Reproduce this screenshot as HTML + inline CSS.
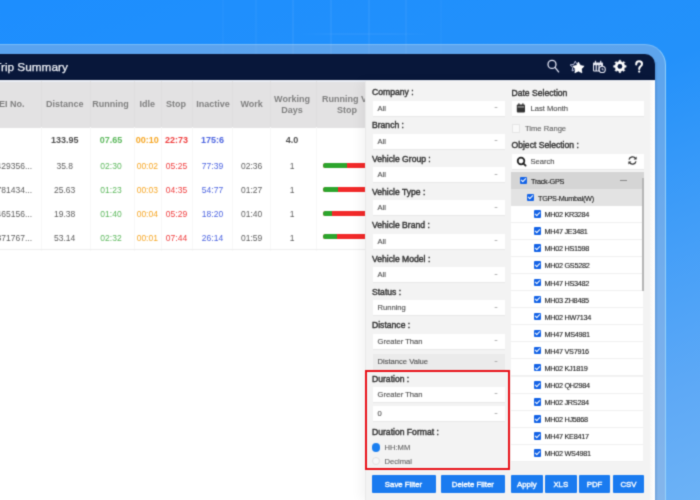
<!DOCTYPE html>
<html><head><meta charset="utf-8">
<style>
*{margin:0;padding:0;box-sizing:border-box}
html,body{width:700px;height:500px;overflow:hidden}
body{position:relative;font-family:"Liberation Sans",sans-serif;background:#2391fa}
#wrap{position:absolute;left:0;top:0;width:700px;height:500px;overflow:hidden;background:linear-gradient(160deg,#1d8efe 0%,#2391fa 40%,#5ea9f6 85%,#6cb2f6 100%);filter:url(#soft)}
.abs{position:absolute}
.gl{position:absolute;top:0;width:2px;height:56px;background:rgba(255,255,255,0.045)}
#frame{position:absolute;left:-30px;top:44px;width:696px;height:480px;border-radius:0 21px 0 0;background:rgba(165,188,222,0.45);border-top:1px solid rgba(150,210,255,0.5);border-right:1.2px solid rgba(160,220,255,0.75)}
#nav{position:absolute;left:-20px;top:54px;width:675px;height:26.2px;border-radius:0 10px 0 0;background:#08173a}
#nav .t{position:absolute;left:14.2px;top:6px;color:#eef1f7;font-size:11.8px;line-height:14px;-webkit-text-stroke:0.25px #eef1f7}
#content{position:absolute;left:0;top:81px;width:655px;height:419px;background:#fff}
#thead{position:absolute;left:0;top:0;width:366px;height:46.5px;background:#e3e2e3}
.sep{position:absolute;top:0;width:1px;height:170px;background:linear-gradient(#dfdedf 0,#dfdedf 46.5px,#f7f7f7 46.5px,#f7f7f7 100%)}
.h{position:absolute;font-size:9px;font-weight:bold;color:#808080;white-space:nowrap;text-align:center;line-height:11px;width:80px;margin-left:-40px}
.c{position:absolute;font-size:8.5px;line-height:10px;color:#606060;white-space:nowrap;text-align:center;width:60px;margin-left:-30px}
.tb{font-weight:bold;font-size:9px;color:#505050}
.g{color:#5cb85c}.o{color:#f6a623}.r{color:#ef3b3b}.b{color:#4b63e0}
.bar{position:absolute;left:322.5px;width:60px;height:5.4px;border-radius:3px;background:#f22a2a;overflow:hidden}
.bar i{display:block;height:5.4px;background:#2da52d}
#panel{position:absolute;left:365px;top:81px;width:290px;height:419px;background:#f3f3f3;border-left:1px solid #e9e9e9;box-shadow:-5px 0 10px rgba(0,0,0,0.045)}
.lab{position:absolute;font-size:8.6px;line-height:10px;font-weight:normal;color:#333;-webkit-text-stroke:0.4px #333;white-space:nowrap}
.inp{position:absolute;height:15px;background:#fff;box-shadow:0 1px 0 #e8e8e8;font-size:7.6px;color:#555;-webkit-text-stroke:0.15px #555;padding-left:5px;line-height:15px;white-space:nowrap}
.inp .ar{position:absolute;right:7px;top:6.6px;width:0;height:0;border-left:2px solid transparent;border-right:2px solid transparent;border-top:1.8px solid #9a9a9a}
.rl{position:absolute;font-size:7.6px;line-height:10px;color:#666;-webkit-text-stroke:0.12px #666;white-space:nowrap}
.btn{position:absolute;top:474.7px;height:18.8px;background:#1a7bf0;color:#fff;font-size:7.8px;font-weight:normal;-webkit-text-stroke:0.35px #fff;text-align:center;line-height:19px;border-radius:1px}
.tr{position:absolute;overflow:hidden}
.tt{position:absolute;top:0.6px;line-height:17px;font-size:7.3px;letter-spacing:-0.3px;color:#222;-webkit-text-stroke:0.12px #222;margin-left:0.5px;white-space:nowrap}
.cb{position:absolute;top:4.6px;width:7px;height:7.5px;background:#1463e6;border-radius:1px}
.cb:after{content:"";position:absolute;left:2.2px;top:0.6px;width:2px;height:4px;border:solid #fff;border-width:0 1.2px 1.2px 0;transform:rotate(45deg)}
.dots{position:absolute;left:109px;top:8px;width:7px;height:1.3px;background:#8a8a8a}
</style></head>
<body>
<svg width="0" height="0" style="position:absolute"><filter id="soft" x="0" y="0" width="100%" height="100%" color-interpolation-filters="sRGB"><feConvolveMatrix order="3" kernelMatrix="1 4 1 4 16 4 1 4 1" divisor="36" edgeMode="duplicate"/></filter></svg>
<div id="wrap">
<div class="gl" style="left:222px;background:rgba(255,255,255,0.025)"></div>
<div class="gl" style="left:255px;background:rgba(255,255,255,0.035)"></div>
<div class="gl" style="left:292px;background:rgba(255,255,255,0.05)"></div>
<div class="gl" style="left:330px;background:rgba(255,255,255,0.05)"></div>
<div class="gl" style="left:368px;background:rgba(255,255,255,0.05)"></div>
<div class="gl" style="left:405px;background:rgba(255,255,255,0.045)"></div>
<div class="gl" style="left:440px;background:rgba(255,255,255,0.02)"></div>
<div class="abs" style="left:300px;top:33px;width:130px;height:1.5px;background:linear-gradient(90deg,rgba(255,255,255,0),rgba(255,255,255,0.04) 30%,rgba(255,255,255,0.04) 70%,rgba(255,255,255,0))"></div>
<div id="frame"></div>
<div class="abs" style="left:655px;top:62px;width:2.5px;height:438px;background:linear-gradient(90deg,rgba(0,40,110,0.14),rgba(0,40,110,0))"></div>
<div id="nav"><div class="t">Trip Summary</div></div>
<svg class="abs" style="left:0;top:0" width="700" height="100" viewBox="0 0 700 100">
<g fill="none" stroke="#dfe2f2" stroke-width="1.3"><circle cx="552" cy="64.4" r="4.0"/><line x1="555" y1="67.4" x2="558.6" y2="71.9" stroke-linecap="round"/></g>
<path d="M575.30,61.20 L576.89,64.42 L580.44,64.93 L577.87,67.43 L578.47,70.97 L575.30,69.30 L572.13,70.97 L572.73,67.43 L570.16,64.93 L573.71,64.42Z" fill="none" stroke="#b8bedc" stroke-width="1" stroke-linejoin="round"/>
<path d="M578.40,62.00 L580.19,65.53 L584.11,66.15 L581.30,68.94 L581.93,72.85 L578.40,71.05 L574.87,72.85 L575.50,68.94 L572.69,66.15 L576.61,65.53Z" fill="#ffffff" stroke="#0a1a3f" stroke-width="1.4" stroke-linejoin="round" paint-order="stroke"/>
<path d="M578.40,62.00 L580.19,65.53 L584.11,66.15 L581.30,68.94 L581.93,72.85 L578.40,71.05 L574.87,72.85 L575.50,68.94 L572.69,66.15 L576.61,65.53Z" fill="#ffffff" stroke="#ffffff" stroke-width="0.6" stroke-linejoin="round"/>
<g fill="#e8eaf4"><rect x="593" y="62.4" width="10" height="9" rx="0.8"/><rect x="594.9" y="60.8" width="1.2" height="2.4"/><rect x="600.1" y="60.8" width="1.2" height="2.4"/></g>
<g fill="#0a1a3f"><rect x="594" y="65.2" width="1.6" height="5.3"/><rect x="596.8" y="65.2" width="1.6" height="5.3"/><rect x="599.6" y="65.2" width="1.6" height="2.3"/></g>
<circle cx="602.2" cy="69.4" r="3.1" fill="#0a1a3f" stroke="#e8eaf4" stroke-width="1.1"/>
<path d="M602.2 67.9 V69.8 H603.6" fill="none" stroke="#e8eaf4" stroke-width="0.8"/>
<path d="M624.43,64.52 L624.73,65.56 L626.15,65.61 L626.15,67.19 L624.73,67.24 L624.43,68.28 L623.91,69.22 L624.88,70.26 L623.76,71.38 L622.72,70.41 L621.78,70.93 L620.74,71.23 L620.69,72.65 L619.11,72.65 L619.06,71.23 L618.02,70.93 L617.08,70.41 L616.04,71.38 L614.92,70.26 L615.89,69.22 L615.37,68.28 L615.07,67.24 L613.65,67.19 L613.65,65.61 L615.07,65.56 L615.37,64.52 L615.89,63.58 L614.92,62.54 L616.04,61.42 L617.08,62.39 L618.02,61.87 L619.06,61.57 L619.11,60.15 L620.69,60.15 L620.74,61.57 L621.78,61.87 L622.72,62.39 L623.76,61.42 L624.88,62.54 L623.91,63.58Z" fill="#ffffff" stroke="#ffffff" stroke-width="0.5" stroke-linejoin="round"/>
<circle cx="619.9" cy="66.4" r="2.4" fill="#0a1a3f"/>
<path d="M636.2 64.4 C636.2 62.4 637.6 61.3 639.1 61.3 C640.7 61.3 642 62.4 642 64 C642 65.4 641.1 66 640.3 66.6 C639.5 67.2 639.2 67.7 639.2 68.9" fill="none" stroke="#ffffff" stroke-width="2" stroke-linecap="round"/>
<circle cx="639.2" cy="71.6" r="1.15" fill="#ffffff"/>
</svg>
<div id="content"><div id="thead"></div><div class="abs" style="left:0;top:-0.8px;width:655px;height:1.3px;background:#e9edf4"></div>
<div class="sep" style="left:41px"></div>
<div class="sep" style="left:90px"></div>
<div class="sep" style="left:133.5px"></div>
<div class="sep" style="left:161px"></div>
<div class="sep" style="left:191.5px"></div>
<div class="sep" style="left:232px"></div>
<div class="sep" style="left:269.5px"></div>
<div class="sep" style="left:315.5px"></div>
<div class="h" style="left:64.7px;top:18px">Distance</div>
<div class="h" style="left:110.6px;top:18px">Running</div>
<div class="h" style="left:147.3px;top:18px">Idle</div>
<div class="h" style="left:176.1px;top:18px">Stop</div>
<div class="h" style="left:213px;top:18px">Inactive</div>
<div class="h" style="left:251.6px;top:18px">Work</div>
<div class="h" style="left:-11px;top:18px;margin-left:0;width:auto;text-align:left">IMEI No.</div>
<div class="h" style="left:292px;top:13px">Working<br>Days</div>
<div class="h" style="left:347px;top:13px">Running Vs<br>Stop</div>
<div class="c tb " style="left:64.7px;top:54.2px">133.95</div>
<div class="c tb g" style="left:111px;top:54.2px">07.65</div>
<div class="c tb o" style="left:147.3px;top:54.2px">00:10</div>
<div class="c tb r" style="left:176.5px;top:54.2px">22:73</div>
<div class="c tb b" style="left:212.5px;top:54.2px">175:6</div>
<div class="c tb " style="left:292px;top:54.2px">4.0</div>
<div class="c" style="left:-30px;width:62px;margin-left:0;text-align:right;top:80.3px">5429356...</div>
<div class="c " style="left:64.7px;top:80.3px">35.8</div>
<div class="c g" style="left:111px;top:80.3px">02:30</div>
<div class="c o" style="left:147.3px;top:80.3px">00:02</div>
<div class="c r" style="left:176.5px;top:80.3px">05:25</div>
<div class="c b" style="left:212.5px;top:80.3px">77:39</div>
<div class="c " style="left:251.6px;top:80.3px">02:36</div>
<div class="c " style="left:292px;top:80.3px">1</div>
<div class="bar" style="top:81.8px"><i style="width:24px"></i></div>
<div class="c" style="left:-30px;width:62px;margin-left:0;text-align:right;top:104.2px">7781434...</div>
<div class="c " style="left:64.7px;top:104.2px">25.63</div>
<div class="c g" style="left:111px;top:104.2px">01:23</div>
<div class="c o" style="left:147.3px;top:104.2px">00:03</div>
<div class="c r" style="left:176.5px;top:104.2px">04:35</div>
<div class="c b" style="left:212.5px;top:104.2px">54:77</div>
<div class="c " style="left:251.6px;top:104.2px">01:27</div>
<div class="c " style="left:292px;top:104.2px">1</div>
<div class="bar" style="top:105.7px"><i style="width:15.5px"></i></div>
<div class="c" style="left:-30px;width:62px;margin-left:0;text-align:right;top:128.0px">5465156...</div>
<div class="c " style="left:64.7px;top:128.0px">19.38</div>
<div class="c g" style="left:111px;top:128.0px">01:40</div>
<div class="c o" style="left:147.3px;top:128.0px">00:04</div>
<div class="c r" style="left:176.5px;top:128.0px">05:29</div>
<div class="c b" style="left:212.5px;top:128.0px">18:20</div>
<div class="c " style="left:251.6px;top:128.0px">01:40</div>
<div class="c " style="left:292px;top:128.0px">1</div>
<div class="bar" style="top:129.5px"><i style="width:9px"></i></div>
<div class="c" style="left:-30px;width:62px;margin-left:0;text-align:right;top:151.5px">9871767...</div>
<div class="c " style="left:64.7px;top:151.5px">53.14</div>
<div class="c g" style="left:111px;top:151.5px">02:32</div>
<div class="c o" style="left:147.3px;top:151.5px">00:01</div>
<div class="c r" style="left:176.5px;top:151.5px">07:44</div>
<div class="c b" style="left:212.5px;top:151.5px">26:14</div>
<div class="c " style="left:251.6px;top:151.5px">01:59</div>
<div class="c " style="left:292px;top:151.5px">1</div>
<div class="bar" style="top:153.0px"><i style="width:14px"></i></div>
<div class="abs" style="left:0;top:168px;width:366px;height:1px;background:#eeeeee"></div>
</div>
<div id="panel"></div>
<div class="abs" style="left:650px;top:81px;width:5px;height:419px;background:linear-gradient(90deg,#f6f6f6,#ffffff)"></div>
<div class="lab" style="left:372px;top:87.0px">Company :</div>
<div class="inp" style="left:372.5px;top:100.5px;width:132px">All<span class="ar"></span></div>
<div class="lab" style="left:372px;top:120.3px">Branch :</div>
<div class="inp" style="left:372.5px;top:133.8px;width:132px">All<span class="ar"></span></div>
<div class="lab" style="left:372px;top:153.6px">Vehicle Group :</div>
<div class="inp" style="left:372.5px;top:167.1px;width:132px">All<span class="ar"></span></div>
<div class="lab" style="left:372px;top:186.9px">Vehicle Type :</div>
<div class="inp" style="left:372.5px;top:200.4px;width:132px">All<span class="ar"></span></div>
<div class="lab" style="left:372px;top:220.2px">Vehicle Brand :</div>
<div class="inp" style="left:372.5px;top:233.7px;width:132px">All<span class="ar"></span></div>
<div class="lab" style="left:372px;top:253.5px">Vehicle Model :</div>
<div class="inp" style="left:372.5px;top:267.0px;width:132px">All<span class="ar"></span></div>
<div class="lab" style="left:372px;top:286.8px">Status :</div>
<div class="inp" style="left:372.5px;top:300.3px;width:132px">Running<span class="ar"></span></div>
<div class="lab" style="left:372px;top:320.1px">Distance :</div>
<div class="inp" style="left:372.5px;top:333.6px;width:132px">Greater Than<span class="ar"></span></div>
<div class="inp" style="left:372.5px;top:354px;width:132px;background:#ebebeb">Distance Value<span class="ar"></span></div>
<div class="abs" style="left:365px;top:370px;width:145px;height:100px;border:2px solid #e8121a"></div>
<div class="lab" style="left:372px;top:373.5px">Duration :</div>
<div class="inp" style="left:372.5px;top:386.5px;width:132px">Greater Than<span class="ar"></span></div>
<div class="inp" style="left:372.5px;top:406.3px;width:132px">0<span class="ar"></span></div>
<div class="lab" style="left:372px;top:427px">Duration Format :</div>
<div class="abs" style="left:371.8px;top:443.2px;width:8.6px;height:8.6px;border-radius:50%;background:#1a7ff0"></div>
<div class="rl" style="left:384.5px;top:442.5px">HH:MM</div>
<div class="abs" style="left:371.8px;top:456.6px;width:8.6px;height:8.6px;border-radius:50%;background:#f7f7f7;border:1px solid #e0e0e0"></div>
<div class="rl" style="left:384.5px;top:457px">Decimal</div>
<div class="lab" style="left:511.5px;top:87.5px">Date Selection</div>
<div class="inp" style="left:511.5px;top:100.8px;width:132.5px;padding-left:19px">Last Month</div>
<svg class="abs" style="left:516px;top:103px" width="10" height="10" viewBox="0 0 10 10"><rect x="0.8" y="1.6" width="8.2" height="7.8" rx="1" fill="#333"/><rect x="2.3" y="0.3" width="1.2" height="2.2" fill="#333"/><rect x="6.3" y="0.3" width="1.2" height="2.2" fill="#333"/><rect x="1.6" y="3.6" width="6.6" height="0.7" fill="#fff"/></svg>
<div class="abs" style="left:511.5px;top:124.3px;width:8.5px;height:8.5px;background:#f9f9f9;border:1px solid #e6e6e6"></div>
<div class="rl" style="left:525px;top:124.2px">Time Range</div>
<div class="lab" style="left:511.5px;top:140.3px">Object Selection :</div>
<div class="inp" style="left:511.5px;top:153.5px;width:132.5px;padding-left:19px">Search</div>
<svg class="abs" style="left:515.5px;top:155.5px" width="12" height="12" viewBox="0 0 12 12"><circle cx="5" cy="5" r="3.3" fill="none" stroke="#222" stroke-width="1.8"/><line x1="7.3" y1="7.3" x2="9.6" y2="9.6" stroke="#222" stroke-width="1.8" stroke-linecap="round"/></svg>
<svg class="abs" style="left:627px;top:154.7px" width="11" height="11" viewBox="0 0 11 11"><path d="M2 4.6 A3.6 3.6 0 0 1 8.6 3.6" fill="none" stroke="#333" stroke-width="1.3"/><path d="M9 6.4 A3.6 3.6 0 0 1 2.4 7.4" fill="none" stroke="#333" stroke-width="1.3"/><path d="M9.6 1.4 V4.4 H6.6Z" fill="#333"/><path d="M1.4 9.6 V6.6 H4.4Z" fill="#333"/></svg>
<div class="tr" style="left:511px;top:172px;width:132.8px;height:17px;background:#d5d5d5"><span class="cb" style="left:9px"></span><span class="tt" style="left:19.5px">Track-GPS</span><span class="dots"></span></div>
<div class="tr" style="left:511px;top:189px;width:132.8px;height:16.7px;background:#e3e3e3"><span class="cb" style="left:16px"></span><span class="tt" style="left:26.5px">TGPS-Mumbai(W)</span></div>
<div class="tr" style="left:511px;top:205.7px;width:132px;height:17.1px;background:#fff;border-bottom:1px solid #f0f0f0"><span class="cb" style="left:23px"></span><span class="tt" style="left:33px">MH02 KR3284</span></div>
<div class="tr" style="left:511px;top:222.8px;width:132px;height:17.1px;background:#fff;border-bottom:1px solid #f0f0f0"><span class="cb" style="left:23px"></span><span class="tt" style="left:33px">MH47 JE3481</span></div>
<div class="tr" style="left:511px;top:239.9px;width:132px;height:17.1px;background:#fff;border-bottom:1px solid #f0f0f0"><span class="cb" style="left:23px"></span><span class="tt" style="left:33px">MH02 HS1598</span></div>
<div class="tr" style="left:511px;top:256.9px;width:132px;height:17.1px;background:#fff;border-bottom:1px solid #f0f0f0"><span class="cb" style="left:23px"></span><span class="tt" style="left:33px">MH02 GS5282</span></div>
<div class="tr" style="left:511px;top:274.0px;width:132px;height:17.1px;background:#fff;border-bottom:1px solid #f0f0f0"><span class="cb" style="left:23px"></span><span class="tt" style="left:33px">MH47 HS3482</span></div>
<div class="tr" style="left:511px;top:291.1px;width:132px;height:17.1px;background:#fff;border-bottom:1px solid #f0f0f0"><span class="cb" style="left:23px"></span><span class="tt" style="left:33px">MH03 ZH8485</span></div>
<div class="tr" style="left:511px;top:308.2px;width:132px;height:17.1px;background:#fff;border-bottom:1px solid #f0f0f0"><span class="cb" style="left:23px"></span><span class="tt" style="left:33px">MH02 HW7134</span></div>
<div class="tr" style="left:511px;top:325.3px;width:132px;height:17.1px;background:#fff;border-bottom:1px solid #f0f0f0"><span class="cb" style="left:23px"></span><span class="tt" style="left:33px">MH47 MS4981</span></div>
<div class="tr" style="left:511px;top:342.3px;width:132px;height:17.1px;background:#fff;border-bottom:1px solid #f0f0f0"><span class="cb" style="left:23px"></span><span class="tt" style="left:33px">MH47 VS7916</span></div>
<div class="tr" style="left:511px;top:359.4px;width:132px;height:17.1px;background:#fff;border-bottom:1px solid #f0f0f0"><span class="cb" style="left:23px"></span><span class="tt" style="left:33px">MH02 KJ1819</span></div>
<div class="tr" style="left:511px;top:376.5px;width:132px;height:17.1px;background:#fff;border-bottom:1px solid #f0f0f0"><span class="cb" style="left:23px"></span><span class="tt" style="left:33px">MH02 QH2984</span></div>
<div class="tr" style="left:511px;top:393.6px;width:132px;height:17.1px;background:#fff;border-bottom:1px solid #f0f0f0"><span class="cb" style="left:23px"></span><span class="tt" style="left:33px">MH02 JRS284</span></div>
<div class="tr" style="left:511px;top:410.7px;width:132px;height:17.1px;background:#fff;border-bottom:1px solid #f0f0f0"><span class="cb" style="left:23px"></span><span class="tt" style="left:33px">MH02 HJ5868</span></div>
<div class="tr" style="left:511px;top:427.7px;width:132px;height:17.1px;background:#fff;border-bottom:1px solid #f0f0f0"><span class="cb" style="left:23px"></span><span class="tt" style="left:33px">MH47 KE8417</span></div>
<div class="tr" style="left:511px;top:444.8px;width:132px;height:17.1px;background:#fff;border-bottom:1px solid #f0f0f0"><span class="cb" style="left:23px"></span><span class="tt" style="left:33px">MH02 WS4981</span></div>
<div class="abs" style="left:642px;top:178px;width:1.6px;height:113px;background:#b5b5b5"></div>
<div class="btn" style="left:371.5px;width:64.0px">Save Filter</div>
<div class="btn" style="left:441px;width:63.7px">Delete Filter</div>
<div class="btn" style="left:511px;width:31.6px">Apply</div>
<div class="btn" style="left:545px;width:31.5px">XLS</div>
<div class="btn" style="left:579px;width:31.0px">PDF</div>
<div class="btn" style="left:613px;width:31.0px">CSV</div>
</div>
</body></html>
